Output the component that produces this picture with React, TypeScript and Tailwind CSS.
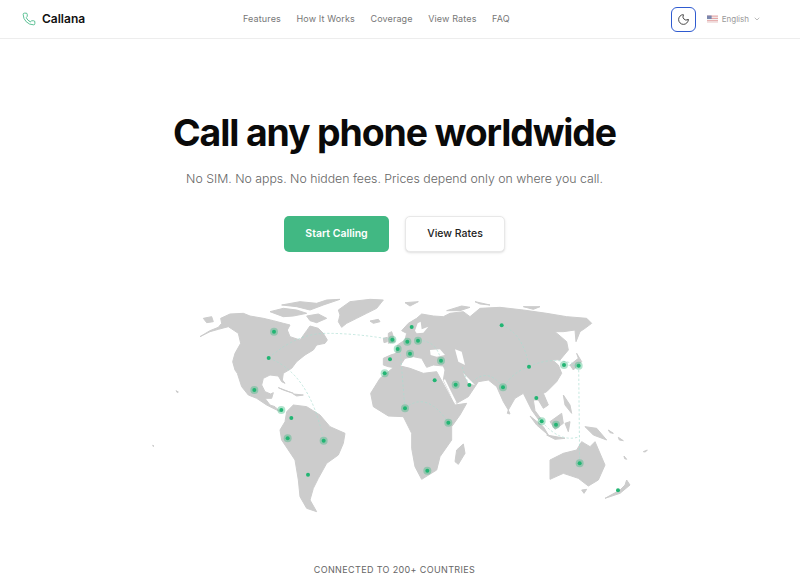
import { ChevronDown, Moon, Phone } from 'lucide-react';

const navLinks = ['Features', 'How It Works', 'Coverage', 'View Rates', 'FAQ'];

// land shapes, in a 1500x690 space (3x the page pixels)
const land = [
  // north america
  '150,140 180,122 205,112 215,100 212,85 240,72 280,70 300,78 340,85 370,92 400,100 420,105 412,120 420,140 450,150 470,122 480,108 505,115 520,130 532,150 525,160 500,165 490,180 465,195 440,215 425,235 400,250 397,270 405,280 395,275 385,258 360,255 340,265 335,285 345,305 362,312 370,308 365,325 345,325 360,345 375,350 390,365 380,360 350,345 320,325 295,315 275,290 262,250 255,240 248,215 255,190 272,160 265,130 235,110 205,118 180,125',
  // greenland
  '565,60 600,35 660,28 700,30 680,55 650,70 620,85 590,100 575,112 565,95 570,75',
  // arctic
  '360,65 400,55 440,60 470,70 430,78 400,80',
  '395,45 450,35 500,40 530,30 570,28 520,45 480,60 440,50',
  '470,78 505,72 530,85 500,98 480,92',
  '160,85 185,80 190,95 170,98',
  '660,93 685,88 690,95 670,100',
  '715,130 725,125 735,155 715,160',
  '700,145 712,142 712,155 702,158',
  '385,293 430,310 400,300',
  '430,312 460,315 440,318',
  '78,302 85,306 82,308',
  '8,466 12,468 9,469',
  // south america
  '410,365 430,345 470,350 510,375 540,410 585,430 580,460 565,495 530,520 505,565 490,595 480,630 500,665 470,655 450,620 445,570 435,510 395,450 390,420 405,395',
  // eurasia
  '700,205 722,195 738,190 742,165 765,150 770,130 755,122 775,100 800,85 815,72 850,78 880,80 900,70 940,65 960,80 990,55 1050,52 1120,60 1190,70 1250,80 1310,85 1325,100 1305,115 1290,125 1278,155 1275,120 1240,125 1215,125 1250,155 1255,180 1230,210 1205,208 1225,225 1235,250 1220,275 1190,305 1180,310 1195,345 1180,355 1165,330 1150,330 1155,362 1172,385 1165,388 1145,360 1120,310 1095,325 1075,360 1060,335 1040,290 1015,270 985,275 955,320 920,340 900,310 880,270 885,240 880,228 850,225 830,232 815,205 790,200 765,205 745,235 715,230 700,225',
  // africa
  '740,225 780,235 820,250 860,245 885,290 915,345 950,340 930,375 905,410 905,450 870,500 860,540 815,568 795,530 785,475 785,430 760,380 715,378 670,350 662,310 690,265',
  '940,462 945,490 925,523 915,515 920,480',
  '1075,360 1080,372 1072,370',
  // japan, islands
  '1260,225 1285,205 1280,190 1295,215 1270,240',
  '1240,315 1260,345 1265,370 1245,345',
  '1140,378 1180,410 1195,435 1160,405',
  '1200,395 1235,370 1240,400 1215,418',
  '1245,400 1260,395 1255,425',
  '1190,435 1245,445 1215,448',
  '1305,410 1340,415 1370,450 1330,435',
  '1375,420 1390,430 1380,428',
  '1405,442 1420,452 1408,450',
  '1422,498 1430,508 1424,506',
  '1480,485 1492,480 1486,486',
  // australia
  '1200,510 1240,490 1280,480 1295,455 1320,470 1335,455 1365,525 1345,570 1315,588 1285,565 1240,550 1200,568',
  '1295,600 1310,598 1302,610',
  '1365,625 1410,600 1425,585 1430,570 1440,585 1410,610',
  // svalbard and far north
  '765,38 805,35 780,48',
  '975,35 1020,45 990,42',
  '1120,50 1170,50 1150,58',
  '890,62 935,48 960,52 930,62',
];

// inland water cut out of the land
const water = [
  '840,180 870,178 885,195 860,200 842,195',
  '915,178 935,185 945,225 925,215',
  '880,270 885,268 920,338 912,336',
  '940,250 975,285 955,280',
  '795,122 803,100 812,95 815,118 835,110 820,128 800,130',
];

const arcs = [
  'M356 204 Q440 130 530 130 T727 149',
  'M356 204 Q480 250 521 452',
  'M1055 106 Q1120 130 1137 230',
  'M1137 230 Q1210 195 1286 227',
  'M1137 230 Q1090 245 1059 292',
  'M1059 292 Q1010 225 958 285',
  'M958 285 Q945 260 935 225',
  'M804 152 Q860 150 873 212',
  'M765 355 Q830 300 895 398',
  'M765 355 L750 175',
  'M1286 227 L1289 520',
  'M1242 225 L1286 227',
  'M1175 394 Q1230 460 1289 440',
];

// x, y, halo
const dots: [number, number, boolean][] = [
  [372, 125, true], [356, 204, false], [313, 300, true], [394, 360, true], [424, 384, false],
  [413, 445, true], [521, 452, true], [474, 554, false], [727, 149, true], [743, 177, true],
  [720, 208, false], [704, 250, true], [785, 111, false], [772, 155, true], [804, 152, true],
  [780, 191, true], [873, 212, true], [854, 271, false], [917, 284, true], [958, 285, false],
  [765, 355, true], [895, 398, true], [832, 542, true], [1055, 106, false], [1137, 230, false],
  [1059, 292, true], [1159, 324, false], [1242, 225, true], [1286, 227, true], [1175, 394, true],
  [1218, 404, true], [1289, 520, true], [1404, 601, false],
];

function WorldMap() {
  return (
    <svg viewBox="0 0 1500 690" className="h-[230px] w-[500px]">
      <g fill="#cccccc" stroke="#cccccc" strokeWidth="3" strokeLinejoin="round">
        {land.map((points, i) => (
          <polygon key={i} points={points} />
        ))}
      </g>
      <g fill="#ffffff">
        {water.map((points, i) => (
          <polygon key={i} points={points} />
        ))}
      </g>
      <g fill="none" stroke="#a9dcd0" strokeWidth="2" strokeDasharray="7 6">
        {arcs.map((d, i) => (
          <path key={i} d={d} />
        ))}
      </g>
      {dots.map(([x, y, halo], i) => (
        <g key={i}>
          {halo && <circle cx={x} cy={y} r="12" fill="#3fb883" fillOpacity="0.4" />}
          <circle cx={x} cy={y} r="6" fill="#22b573" />
        </g>
      ))}
    </svg>
  );
}

export default function App() {
  return (
    <div className="flex h-[577px] flex-col overflow-hidden bg-white font-['Inter',sans-serif]">
      <header className="flex h-[39px] shrink-0 items-center border-b border-[#ededed] pl-[22px] pr-[39px]">
        <div className="flex w-[221px] items-center gap-[6px]">
          <Phone className="h-[14px] w-[14px] text-[#45b886]" strokeWidth={1.5} />
          <span className="text-[12px] font-semibold text-[#111]">Callana</span>
        </div>
        <nav className="flex items-center gap-[15.5px] text-[9px] tracking-[0.015em] text-[#777]">
          {navLinks.map((link) => (
            <a key={link}>{link}</a>
          ))}
        </nav>
        <div className="ml-auto flex items-center gap-[11px]">
          <button className="flex h-[25px] w-[25px] items-center justify-center rounded-[6px] border-[1.5px] border-[#2f5bd0]">
            <Moon className="h-[13px] w-[13px] text-[#222]" strokeWidth={1.5} />
          </button>
          <div className="flex items-center gap-[4px] text-[8px] text-[#999]">
            <svg viewBox="0 0 19 12" className="h-[8px] w-[11px]">
              <rect width="19" height="12" fill="#e5a5a5" />
              <rect y="2" width="19" height="2" fill="#f3f3f3" />
              <rect y="6" width="19" height="2" fill="#f3f3f3" />
              <rect y="10" width="19" height="2" fill="#f3f3f3" />
              <rect width="8" height="6" fill="#7a86ad" />
            </svg>
            <span>English</span>
            <ChevronDown className="h-[8px] w-[8px]" />
          </div>
        </div>
      </header>
      <main className="flex flex-col items-center pr-[11px] pt-[69px]">
        <h1 className="text-[37.4px] leading-[50px] font-bold tracking-[-0.03em] text-[#0a0a0a]">
          Call any phone worldwide
        </h1>
        <p className="mt-[11px] text-[12.3px] leading-[20px] font-light text-[#666]">
          No SIM. No apps. No hidden fees. Prices depend only on where you call.
        </p>
        <div className="mt-[27px] flex gap-4">
          <button className="h-[36px] w-[105px] rounded-[5px] bg-[#41b883] text-[10.5px] font-semibold text-white">
            Start Calling
          </button>
          <button className="h-[36px] w-[100px] rounded-[5px] border border-[#e8e8e8] bg-white text-[10.5px] font-medium text-[#222] shadow-sm">
            View Rates
          </button>
        </div>
        <div className="mt-[38px] ml-[11px]">
          <WorldMap />
        </div>
        <p className="mt-[44px] text-[9px] leading-[12px] tracking-[0.04em] text-[#666] uppercase">
          Connected to 200+ countries
        </p>
      </main>
    </div>
  );
}
